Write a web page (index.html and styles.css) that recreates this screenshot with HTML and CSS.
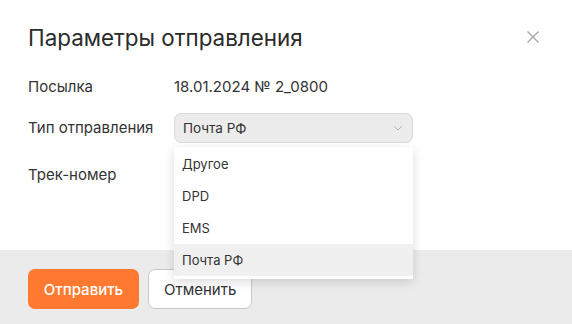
FILE: index.html
```html
<!DOCTYPE html>
<html lang="ru">
<head>
    <meta charset="UTF-8">
    <meta name="viewport" content="width=device-width, initial-scale=1.0">
    <title>Параметры отправления</title>
    <link rel="stylesheet" href="styles.css">
</head>
<body>

<div class="modal">
    <div class="modal-body">
        <div class="modal-header">
            <h2>Параметры отправления</h2>
            <button class="close" aria-label="Закрыть">
                <svg width="14" height="14" viewBox="0 0 14 14"><path d="M1.5 1.5l11 11M12.5 1.5l-11 11" stroke="#a8a8a8" stroke-width="1.4" fill="none"/></svg>
            </button>
        </div>
        <div class="row">
            <div class="label">Посылка</div>
            <div class="value">18.01.2024 № 2_0800</div>
        </div>
        <div class="row row-select">
            <div class="label">Тип отправления</div>
            <div class="value">
                <div class="select">
                    <span>Почта РФ</span>
                    <svg width="10" height="6" viewBox="0 0 10 6"><path d="M1 1l4 4 4-4" stroke="#b5b5b5" stroke-width="1" fill="none"/></svg>
                </div>
                <ul class="dropdown">
                    <li>Другое</li>
                    <li>DPD</li>
                    <li>EMS</li>
                    <li class="active">Почта РФ</li>
                </ul>
            </div>
        </div>
        <div class="row">
            <div class="label">Трек-номер</div>
        </div>
    </div>
    <div class="modal-footer">
        <button class="btn btn-primary">Отправить</button>
        <button class="btn btn-default">Отменить</button>
    </div>
</div>

</body>
</html>
```

FILE: styles.css
```css
body {
    font-family: Inter, "Noto Sans", sans-serif;
    margin: 0;
    padding: 0;
    background: white;
    color: #333;
}
.modal {
    width: 572px;
    height: 324px;
    display: flex;
    flex-direction: column;
}
.modal-body {
    flex: 1;
    padding: 0 28px;
}
.modal-header {
    display: flex;
    justify-content: space-between;
    align-items: center;
    height: 74px;
}
.modal-header h2 {
    margin: 0;
    font-size: 22.4px;
    font-weight: 400;
    color: #2b2b2b;
}
.close {
    background: none;
    border: none;
    padding: 0;
    margin-right: 4px;
    display: flex;
    cursor: pointer;
}
.row {
    display: flex;
    align-items: center;
    font-size: 15px;
    height: 24px;
}
.row-select {
    height: 30px;
    margin-top: 15px;
    align-items: flex-start;
}
.row-select .label {
    line-height: 30px;
}
.row:last-child {
    margin-top: 19px;
}
.label {
    width: 146px;
    color: #333;
}
.value {
    position: relative;
    color: #333;
}
.select {
    width: 239px;
    height: 30px;
    box-sizing: border-box;
    background: #ececec;
    border: 1px solid #dcdcdc;
    border-radius: 7px;
    display: flex;
    align-items: center;
    justify-content: space-between;
    padding: 0 9px 0 8px;
    font-size: 13.5px;
}
.dropdown {
    position: absolute;
    top: 34px;
    left: 0;
    width: 239px;
    margin: 0;
    padding: 1px 0 3px;
    list-style: none;
    background: white;
    box-shadow: 0 3px 10px rgba(0, 0, 0, 0.14);
    z-index: 2;
}
.dropdown li {
    height: 32px;
    line-height: 32px;
    padding: 0 8px;
    font-size: 13px;
}
.dropdown li.active {
    background: #f0f0f0;
}
.modal-footer {
    background: #ebebeb;
    height: 74px;
    padding: 19px 28px 0;
    box-sizing: border-box;
    display: flex;
    gap: 9px;
    align-items: flex-start;
}
.btn {
    height: 40px;
    border-radius: 7px;
    font-family: inherit;
    font-size: 15px;
    padding: 0 15px;
    cursor: pointer;
}
.btn-primary {
    background: #ff7a30;
    border: none;
    color: white;
    width: 111px;
    font-weight: 500;
}
.btn-default {
    background: white;
    border: 1px solid #c8c8c8;
    color: #333;
    width: 104px;
}
```
